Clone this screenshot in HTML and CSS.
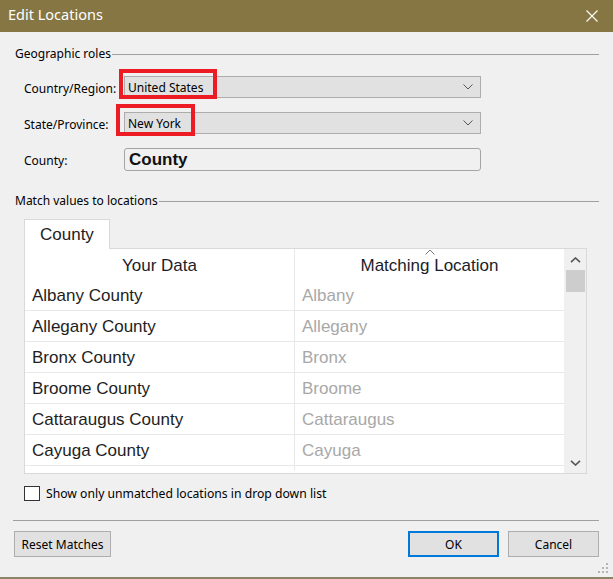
FILE: index.html
```html
<!DOCTYPE html>
<html>
<head>
<meta charset="utf-8">
<link rel="stylesheet" href="styles.css">
</head>
<body>
<div class="dialog">
  <div class="titlebar">
    <span class="title">Edit Locations</span>
    <svg class="close" width="12" height="12" viewBox="0 0 12 12"><path d="M0.5 0.5 L11.5 11.5 M11.5 0.5 L0.5 11.5" stroke="#fff" stroke-width="1.1" fill="none"/></svg>
  </div>
  <div class="body">
    <div class="legend"><span>Geographic roles</span><div class="rule"></div></div>
    <div class="form">
      <label class="lbl">Country/Region:</label>
      <div class="ctl">
        <div class="select"><span>United States</span><svg width="10" height="6" viewBox="0 0 10 6"><polyline points="0.5,0.5 5,5 9.5,0.5" fill="none" stroke="#555" stroke-width="1"/></svg></div>
        <div class="mark mark1"></div>
      </div>
      <label class="lbl">State/Province:</label>
      <div class="ctl">
        <div class="select"><span>New York</span><svg width="10" height="6" viewBox="0 0 10 6"><polyline points="0.5,0.5 5,5 9.5,0.5" fill="none" stroke="#555" stroke-width="1"/></svg></div>
        <div class="mark mark2"></div>
      </div>
      <label class="lbl">County:</label>
      <div class="ctl">
        <div class="input">County</div>
      </div>
    </div>
    <div class="legend legend2"><span>Match values to locations</span><div class="rule"></div></div>
    <div class="tab">County</div>
    <div class="panel">
      <div class="table">
        <div class="row head">
          <div class="c1">Your Data</div>
          <div class="c2"><svg class="sort" width="10" height="6" viewBox="0 0 10 6"><polyline points="0.5,5.5 5,1 9.5,5.5" fill="none" stroke="#777" stroke-width="1"/></svg>Matching Location</div>
        </div>
        <div class="row"><div class="c1">Albany County</div><div class="c2">Albany</div></div>
        <div class="row"><div class="c1">Allegany County</div><div class="c2">Allegany</div></div>
        <div class="row"><div class="c1">Bronx County</div><div class="c2">Bronx</div></div>
        <div class="row"><div class="c1">Broome County</div><div class="c2">Broome</div></div>
        <div class="row"><div class="c1">Cattaraugus County</div><div class="c2">Cattaraugus</div></div>
        <div class="row"><div class="c1">Cayuga County</div><div class="c2">Cayuga</div></div>
        <div class="row"><div class="c1"></div><div class="c2"></div></div>
      </div>
      <div class="scrollbar">
        <div class="sbtn"><svg width="11" height="6" viewBox="0 0 11 6"><polyline points="1,5.2 5.5,1 10,5.2" fill="none" stroke="#555" stroke-width="1.6"/></svg></div>
        <div class="thumb"></div>
        <div class="track"></div>
        <div class="sbtn"><svg width="11" height="6" viewBox="0 0 11 6"><polyline points="1,0.8 5.5,5 10,0.8" fill="none" stroke="#555" stroke-width="1.6"/></svg></div>
      </div>
    </div>
    <div class="check">
      <div class="box"></div>
      <span>Show only unmatched locations in drop down list</span>
    </div>
    <div class="sep"></div>
    <div class="buttons">
      <div class="btn reset">Reset Matches</div>
      <div class="spacer"></div>
      <div class="btn ok">OK</div>
      <div class="btn cancel">Cancel</div>
    </div>
  </div>
  <div class="bottomline"></div>
  <svg class="grip" width="12" height="12" viewBox="0 0 12 12" fill="#b5b5b5">
    <rect x="8" y="0" width="2" height="2"/>
    <rect x="4" y="4" width="2" height="2"/><rect x="8" y="4" width="2" height="2"/>
    <rect x="0" y="8" width="2" height="2"/><rect x="4" y="8" width="2" height="2"/><rect x="8" y="8" width="2" height="2"/>
  </svg>
</div>
</body>
</html>
```
FILE: styles.css
```css
* { box-sizing: border-box; }
html, body { margin: 0; padding: 0; }
body {
  width: 613px;
  height: 579px;
  overflow: hidden;
  background: #f0f0f0;
  font-family: "Noto Sans", "Open Sans", sans-serif;
  font-size: 12px;
  color: #000;
}
.dialog {
  position: relative;
  width: 613px;
  height: 579px;
  display: flex;
  flex-direction: column;
}
.titlebar {
  height: 32px;
  flex: none;
  background: #857643;
  display: flex;
  align-items: center;
  justify-content: space-between;
  padding: 0 15px 1px 8px;
}
.title {
  color: #fff;
  font-size: 14.5px;
  line-height: 20px;
  margin-bottom: 3px;
}
.close { display: block; }
.body {
  flex: 1;
  padding: 0 14px 0 15px;
  display: flex;
  flex-direction: column;
}
.legend {
  margin-top: 13px;
  height: 16px;
  line-height: 16px;
  display: flex;
  align-items: center;
  white-space: nowrap;
}
.legend span { padding-top: 2px; }
.legend .rule {
  flex: 1;
  height: 0;
  border-top: 1px solid #a0a0a0;
  margin-left: 1px;
  margin-top: 2px;
}
.legend2 { margin-top: 21px; }
.form {
  margin-top: 15px;
  padding-left: 9px;
  display: grid;
  grid-template-columns: 100px 357px;
  grid-template-rows: 22px 22px 23px;
  row-gap: 14px;
  align-items: center;
}
.lbl { line-height: 16px; padding-top: 3px; }
.ctl { position: relative; height: 100%; }
.select {
  height: 100%;
  background: #e1e1e1;
  border: 1px solid #adadad;
  display: flex;
  align-items: center;
  justify-content: space-between;
  padding: 0 7px 0 3px;
  line-height: 16px;
}
.select span { padding-top: 1px; }
.select svg { display: block; }
.input {
  height: 100%;
  border: 1px solid #a5a5a5;
  border-radius: 3px;
  padding-left: 4px;
  padding-top: 1px;
  font-family: "Liberation Sans", Arial, sans-serif;
  font-weight: bold;
  font-size: 17px;
  line-height: 20px;
  color: #111;
}
.mark {
  position: absolute;
  border: 4px solid #ed1c24;
}
.mark1 { left: -5px; top: -7px; width: 98px; height: 30px; }
.mark2 { left: -8px; top: -8px; width: 79px; height: 32px; }
.tab {
  margin-top: 11px;
  margin-left: 9px;
  width: 86px;
  height: 30px;
  margin-bottom: -1px;
  background: #fff;
  border: 1px solid #d9d9d9;
  border-bottom: none;
  position: relative;
  z-index: 1;
  font-family: "Liberation Sans", Arial, sans-serif;
  font-size: 17px;
  line-height: 30px;
  padding-left: 15px;
  color: #222;
}
.panel {
  margin-left: 9px;
  width: 563px;
  height: 226px;
  border: 1px solid #d9d9d9;
  background: #fff;
  display: flex;
}
.table {
  width: 539px;
  height: 221px;
  overflow: hidden;
  font-family: "Liberation Sans", Arial, sans-serif;
  font-size: 17px;
}
.row {
  display: flex;
  height: 31px;
  border-bottom: 1px solid #e8e8e8;
}
.row.head { border-bottom: none; }
.c1 {
  width: 270px;
  border-right: 1px solid #e8e8e8;
  padding-left: 7px;
  line-height: 31px;
  color: #1e1e1e;
}
.c2 {
  width: 269px;
  padding-left: 7px;
  line-height: 31px;
  color: #a8a8a8;
}
.head .c1, .head .c2 {
  text-align: center;
  padding-left: 0;
  color: #1c1c2a;
  line-height: 33px;
  position: relative;
}
.sort {
  position: absolute;
  top: 0;
  left: 50%;
  transform: translateX(-50%);
}
.scrollbar {
  width: 22px;
  height: 224px;
  background: #f0f0f0;
  display: flex;
  flex-direction: column;
  align-items: center;
}
.sbtn {
  height: 21px;
  flex: none;
  width: 100%;
  display: flex;
  align-items: center;
  justify-content: center;
}
.sbtn svg { display: block; }
.thumb {
  width: 19px;
  height: 22px;
  background: #cdcdcd;
  flex: none;
}
.track { flex: 1; }
.check {
  margin-top: 12px;
  margin-left: 9px;
  height: 15px;
  display: flex;
  align-items: center;
  line-height: 16px;
  font-size: 12.2px;
}
.box {
  width: 16px;
  height: 15px;
  border: 1px solid #333;
  background: #fff;
  margin-right: 6px;
}
.sep {
  margin-top: 19px;
  margin-left: -2px;
  height: 0;
  border-top: 1px solid #a0a0a0;
}
.buttons {
  margin-top: 10px;
  margin-left: -1px;
  display: flex;
  height: 26px;
}
.spacer { flex: 1; }
.btn {
  height: 26px;
  background: #e1e1e1;
  border: 1px solid #adadad;
  display: flex;
  align-items: center;
  justify-content: center;
  line-height: 16px;
  padding-top: 2px;
}
.reset { width: 97px; }
.ok { width: 91px; border: 2px solid #0078d7; margin-right: 9px; }
.cancel { width: 91px; }
.bottomline {
  height: 2px;
  flex: none;
  background: #8c8466;
}
.grip {
  position: absolute;
  right: 3px;
  bottom: 4px;
}
```
